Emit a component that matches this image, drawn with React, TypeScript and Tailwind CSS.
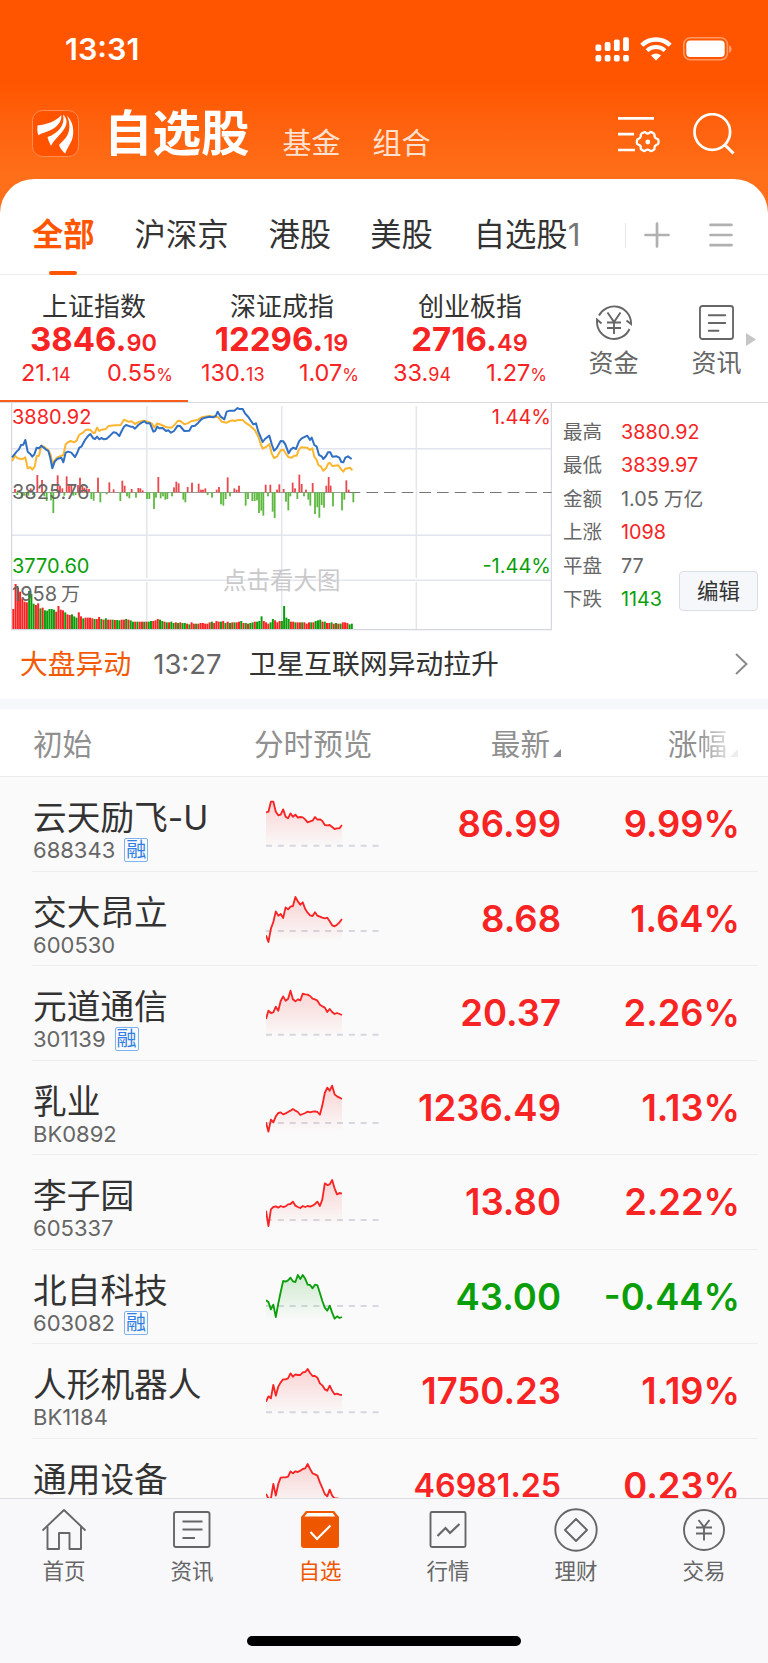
import type { ReactNode } from 'react';

const RED = '#f82323';
const GREEN = '#0a9f0a';

/** 自选股数据，trend 为分时走势（每个点间隔相同），base 为昨收虚线位置 */
interface Stock {
  name: string;
  code: string;
  margin?: boolean;
  price: string;
  change: string;
  small?: boolean;
  trend: number[];
  base: number;
}

const STOCKS: Stock[] = [
  {
    name: '云天励飞-U', code: '688343', margin: true, price: '86.99', change: '9.99%', base: 206,
    trend: [106, 104, 74, 74, 104, 115, 113, 97, 119, 124, 109, 119, 113, 122, 120, 121, 127, 136, 133, 131, 120, 128, 127, 132, 144, 145, 144, 150, 156, 154, 154, 144],
  },
  {
    name: '交大昂立', code: '600530', price: '8.68', change: '1.64%', base: 177,
    trend: [190, 210, 170, 150, 118, 131, 126, 138, 106, 112, 104, 102, 75, 88, 98, 91, 111, 122, 130, 132, 121, 131, 134, 137, 139, 137, 148, 160, 163, 158, 151, 141],
  },
  {
    name: '元道通信', code: '301139', margin: true, price: '20.37', change: '2.26%', base: 206,
    trend: [159, 134, 141, 139, 122, 134, 105, 91, 104, 99, 74, 100, 106, 100, 103, 83, 85, 86, 90, 98, 100, 104, 116, 121, 125, 138, 129, 138, 144, 141, 144, 147],
  },
  {
    name: '乳业', code: 'BK0892', price: '1236.49', change: '1.13%', base: 186,
    trend: [184, 212, 176, 184, 166, 156, 154, 160, 157, 153, 149, 144, 149, 153, 162, 159, 156, 152, 154, 152, 151, 153, 161, 133, 96, 80, 89, 74, 100, 106, 110, 114],
  },
  {
    name: '李子园', code: '605337', price: '13.80', change: '2.22%', base: 195,
    trend: [167, 213, 163, 156, 154, 158, 153, 156, 154, 148, 147, 140, 152, 156, 159, 153, 156, 153, 155, 152, 147, 140, 153, 133, 85, 90, 88, 75, 100, 118, 114, 116],
  },
  {
    name: '北自科技', code: '603082', margin: true, price: '43.00', change: '-0.44%', base: 168,
    trend: [151, 156, 178, 164, 201, 161, 126, 93, 95, 91, 83, 94, 96, 75, 87, 75, 86, 104, 105, 115, 104, 106, 129, 153, 173, 182, 167, 188, 206, 199, 204, 201],
  },
  {
    name: '人形机器人', code: 'BK1184', price: '1750.23', change: '1.19%', base: 205,
    trend: [173, 157, 163, 123, 155, 128, 115, 106, 106, 103, 88, 98, 91, 93, 93, 85, 84, 75, 87, 96, 96, 101, 118, 124, 136, 140, 125, 140, 151, 149, 152, 153],
  },
  {
    name: '通用设备', code: 'BK0545', price: '46981.25', change: '0.23%', small: true, base: 205,
    trend: [165, 178, 179, 135, 170, 135, 116, 115, 115, 113, 97, 103, 97, 99, 95, 90, 88, 75, 90, 103, 106, 110, 130, 147, 165, 172, 152, 170, 178, 178, 180, 180],
  },
];

const INDICES = [
  { name: '上证指数', int: '3846', dec: '90', diff: '21', diffDec: '14', pct: '0.55', box: 'pl-[21px] pr-[15px]' },
  { name: '深证成指', int: '12296', dec: '19', diff: '130', diffDec: '13', pct: '1.07', box: 'pl-[13px] pr-[17px]' },
  { name: '创业板指', int: '2716', dec: '49', diff: '33', diffDec: '94', pct: '1.27', box: 'pl-[17px] pr-[17px]' },
];

const DETAILS = [
  { label: '最高', value: '3880.92', color: 'text-[#f82323]' },
  { label: '最低', value: '3839.97', color: 'text-[#f82323]' },
  { label: '金额', value: '1.05', unit: '万亿', color: 'text-[#666]' },
  { label: '上涨', value: '1098', color: 'text-[#f82323]' },
  { label: '平盘', value: '77', color: 'text-[#666]' },
  { label: '下跌', value: '1143', color: 'text-[#0a9f0a]' },
];

const PRICE_LINE =
  '36,187 50,170 57,163 63,150 70,149 76,135 83,170 90,176 97,185 103,178 110,158 117,160 124,152 137,163 145,168 150,185 157,220 164,200 172,192 184,188 190,202 197,173 204,170 214,173 225,186 231,175 238,158 244,155 255,135 265,122 271,117 280,130 285,132 291,125 298,133 304,129 312,133 320,131 330,122 340,112 348,113 358,123 365,108 372,95 378,90 392,95 398,95 405,101 415,90 425,83 433,79 440,85 450,85 460,110 465,108 472,95 478,100 488,99 498,108 505,106 513,113 522,108 533,92 540,93 553,108 568,107 575,94 585,92 595,83 605,72 615,68 628,65 640,67 648,62 653,50 662,65 673,73 680,50 690,47 703,47 713,39 718,42 728,42 735,55 745,66 760,88 768,85 775,110 788,141 795,132 808,122 816,150 822,167 830,160 842,138 850,139 856,148 866,175 873,163 880,158 888,162 897,139 905,130 922,122 930,135 935,128 943,150 950,155 957,180 965,184 970,192 978,183 984,172 991,172 997,185 1010,184 1018,188 1024,201 1030,202 1036,188 1044,184 1055,192';

const AVG_LINE =
  '36,198 45,182 53,190 63,192 70,191 76,187 83,220 90,216 97,224 104,215 110,183 117,182 124,152 131,155 145,165 152,180 157,205 165,195 172,187 190,180 197,148 205,141 212,138 222,142 230,137 237,120 250,112 258,104 270,104 280,114 285,113 291,98 298,108 305,104 318,102 325,93 345,91 362,90 372,74 385,80 395,79 405,87 418,80 430,77 443,80 455,85 463,97 472,85 485,90 500,97 515,98 525,88 533,78 540,77 553,88 563,85 575,78 590,76 605,67 628,63 655,67 665,80 680,83 690,78 698,76 703,78 715,75 728,75 735,82 750,92 765,106 775,125 782,147 788,161 800,155 808,147 815,175 822,189 832,184 842,166 850,164 857,175 866,187 875,188 883,182 890,182 897,163 903,157 922,158 930,165 937,160 943,185 950,195 955,210 963,215 970,227 978,220 985,205 990,204 997,213 1015,211 1022,221 1030,230 1036,221 1050,218 1057,226';

// [x, 高度]，正数为红柱（向上），负数为绿柱（向下）
const MOMENTUM: Array<[number, number]> = [
  [45, 10], [52, -8], [65, -18], [72, -10], [85, -10], [92, 12], [99, -8], [112, 52], [126, 37], [133, -12], [140, -26], [153, -24],
  [160, -62], [173, 51], [180, 20], [187, 12], [193, -10], [200, 48], [207, 20], [214, 22], [220, -10], [227, -8], [234, 22], [240, 44],
  [247, 20], [253, 14], [260, 12], [267, 10], [274, -20], [281, -25], [294, 44], [301, -30], [320, -6], [328, 30], [341, 9], [361, -26],
  [367, 35], [374, 20], [381, -12], [388, -18], [395, 10], [408, -16], [415, 13], [421, 12], [428, 6], [441, -20], [448, -20], [462, -50],
  [468, -16], [475, 46], [482, -18], [489, -12], [496, -22], [502, -20], [516, -12], [522, 15], [529, 32], [536, 27], [550, -22], [556, -30],
  [563, 16], [576, 29], [596, 26], [603, 8], [609, 8], [616, 12], [623, -8], [636, -16], [650, 8], [657, 16], [663, -36], [670, -40],
  [677, -20], [683, 45], [690, -12], [703, 12], [710, 8], [717, 20], [737, -40], [744, -20], [757, -26], [764, -26], [771, -24], [777, -62],
  [784, -55], [790, -70], [797, 23], [804, -12], [811, 23], [818, -58], [824, -77], [831, 8], [838, 24], [851, 10], [858, -28], [865, -54],
  [871, -12], [878, 29], [885, 12], [892, -20], [898, 53], [905, 25], [912, -12], [918, 8], [925, -22], [931, -40], [938, 28], [945, -65],
  [952, -45], [958, -76], [965, -38], [972, -46], [979, 20], [986, 46], [992, 20], [999, -42], [1026, -54], [1033, -22], [1039, 36],
  [1046, 8], [1060, -30],
];

// 成交量柱，正红负绿
const VOLUME = [
  60, 135, 124, 112, 92, 82, 80, -114, -105, -76, 72, 77, -62, 64, -56, -55, -60, -60, -58, 52, 69, 58, 56, -50, 44, 42, -44, -38, -34,
  50, 38, -32, 34, 34, 34, 32, -30, 30, 36, -30, 28, -32, 28, 28, -28, 27, -27, -26, 28, 28, -30, 28, -26, -22, 22, -22, 22, 22, -22,
  22, -22, -24, 24, 26, 30, -28, -24, 22, -20, 20, -22, -18, 20, -18, 20, -18, -18, 16, -14, 20, 16, -16, 16, 18, 18, 16, 16, 20, -22,
  18, 24, 22, -22, 24, -18, 22, -18, 20, -20, 20, 22, -24, 18, -18, 16, -18, -20, 22, -22, -24, -38, 24, 20, 16, -20, -30, 26, 20, 24,
  -24, -69, -34, -30, 22, 22, -20, 20, 20, -20, 20, 16, 20, -20, 20, -24, -26, -28, 22, -22, 18, 18, -20, 16, -18, 16, -16, 20, 20, 18, -14,
  -16,
];

function StatusBar() {
  return (
    <div className="flex h-[98px] items-center pr-[36px] pl-[65px] text-white">
      <span className="text-[30.5px] leading-[30px] font-semibold">13:31</span>
      <svg className="ml-auto" width="35" height="25" viewBox="0 0 35 25" fill="currentColor">
        {[0, 1, 2, 3].map((i) => (
          <g key={i}>
            <rect x={i * 9.2 + 0.5} y={7.4 - i * 2.4} width="5.8" height={6.6 + i * 2.4} rx="1.7" />
            <rect x={i * 9.2 + 0.5} y="18" width="5.8" height="6.4" rx="1.7" />
          </g>
        ))}
      </svg>
      <svg className="ml-[10px]" width="32" height="24" viewBox="0 0 32 24" fill="none" stroke="currentColor">
        <path d="M1.8 8.2a20.5 20.5 0 0 1 28.4 0" strokeWidth="4.3" />
        <path d="M7 13.6a13 13 0 0 1 18 0" strokeWidth="4" />
        <path d="M11 18.6a7.3 7.3 0 0 1 10 0l-5 4.9z" fill="currentColor" stroke="none" />
      </svg>
      <svg className="ml-[11px]" width="49" height="24" viewBox="0 0 49 24">
        <rect x="0.8" y="0.8" width="43.6" height="22" rx="6.5" fill="none" stroke="#fff" strokeOpacity="0.4" strokeWidth="1.6" />
        <rect x="3.3" y="3.5" width="38.4" height="16.6" rx="4" fill="#fff" />
        <path d="M46.2 8.2c3 1.4 3 6.2 0 7.6z" fill="#fff" fillOpacity="0.5" />
      </svg>
    </div>
  );
}

function AppBar() {
  return (
    <div className="flex h-[71px] items-center pr-[33px] pl-8 text-white">
      <svg width="47" height="47" viewBox="0 0 47 47" fill="#fff">
        <rect x="0.5" y="0.5" width="46" height="46" rx="10" fill="#ff5300" stroke="#ff8f57" />
        <path d="M5.6 15.5C15 14.5 24.5 11 29.3 5c.9 6.5-4.5 12.5-11.5 15.6-4 1.7-8 2.6-11.5 4.6C5.2 22 5.1 18.5 5.6 15.5z" />
        <path d="M31 4.7c3.7 2.7 4.6 7.8 2.3 12.3-3 6.5-10.2 11-14.3 18.8-1.5-2.7-2.7-5.5-3.5-8.8C23 24.5 33.8 17.5 31 4.7z" />
        <path d="M34.7 5.4c5.2 4.7 7.6 12.6 6.2 20.6-1.2 6.8-5.3 10.9-7.7 17.6-2.4-2.2-4.6-4.6-6.2-8.6 3-3.7 7.2-6.5 9.1-11.6 2.2-5.7 1.6-12-1.4-18z" />
      </svg>
      <h1 className="ml-[25px] text-[48.5px] leading-[47px] font-bold">自选股</h1>
      <span className="mt-[21px] ml-[33px] text-[29px] leading-8 text-[#ffe1d1]">基金</span>
      <span className="mt-[21px] ml-8 text-[29px] leading-8 text-[#ffe1d1]">组合</span>
      <svg className="ml-auto" width="42" height="42" viewBox="0 0 42 42" fill="none" stroke="#fff" strokeWidth="2.7">
        <path d="M0 5.3h36M0 21.2h16M0 37h17" />
        <path
          strokeWidth="2.3"
          strokeLinejoin="round"
          d="M25.5 19.5q1.5-1 2.5.4 1.7 1.2 3.4 0 1.2-1.5 2.8-.4l1.6 1q1.2.9.6 2.4.1 2 2 2.7 2.1.2 2.1 2v2.6q-.2 1.5-2 1.7-2 .8-2 2.7.3 1.8-1 2.4l-2 1q-1.2.4-2.3-.9-1.5-1-3.2 0-1.2 1.4-2.6.7l-2-1.2q-1.2-.8-.6-2.2 0-1.9-2-2.5-1.8-.3-1.9-1.7v-2.5q.2-1.5 2-2 1.8-.7 1.9-2.6-.5-1.7.7-2.5z"
        />
        <circle cx="29.8" cy="29" r="2.4" fill="#fff" stroke="none" />
      </svg>
      <svg className="ml-[33px]" width="42" height="42" viewBox="0 0 42 42" fill="none" stroke="#fff" strokeWidth="2.7">
        <circle cx="19.3" cy="19" r="17.8" />
        <path d="M31.5 31.5l9 9" strokeWidth="3" />
      </svg>
    </div>
  );
}

function GroupTabs() {
  return (
    <div className="flex h-[96px] items-center border-b border-[#ebebee] pt-[17px] pl-8 text-[31.3px] leading-[44px] text-[#333]">
      <div className="relative font-bold text-[#ff5500]">
        全部
        <span className="absolute -bottom-[18px] left-[17px] h-1 w-7 rounded-xs bg-[#ff5500]" />
      </div>
      <span className="ml-10">沪深京</span>
      <span className="ml-10">港股</span>
      <span className="ml-[39px]">美股</span>
      <span className="ml-[41px]">
        自选股<span className="text-[#777]">1</span>
      </span>
      <span className="ml-auto h-[25px] w-px bg-[#e8e8ea]" />
      <svg className="ml-[18px]" width="26" height="26" viewBox="0 0 26 26" stroke="#b0b0b0" strokeWidth="2.7" strokeLinecap="round">
        <path d="M13 1.5v23M1.5 13h23" />
      </svg>
      <svg className="mr-[35px] ml-[39px]" width="24" height="26" viewBox="0 0 24 26" stroke="#b0b0b0" strokeWidth="2.7" strokeLinecap="round">
        <path d="M1.5 2.8h21M1.5 13h21M1.5 23.2h21" />
      </svg>
    </div>
  );
}

function NewsGlyph({ size }: { size: number }) {
  return (
    <svg width={size} height={size} viewBox="0 0 36 36" fill="none" stroke="#666" strokeWidth="1.9" strokeLinecap="round">
      <rect x="1" y="1" width="34" height="34" rx="2.5" />
      <path d="M10 10.5h17M10 18.5h17M10 26.5h10" />
    </svg>
  );
}

function IndexPanel() {
  return (
    <div className="flex h-[128px] shrink-0 border-b border-[#d8dae3]">
      {INDICES.map((item, i) => (
        <div
          key={item.name}
          className={`w-[188px] shrink-0 border-b-2 pt-[18px] ${i === 0 ? 'border-[#f95f1b]' : 'border-transparent'}`}
        >
          <div className="text-center text-[26px] leading-7 text-[#333]">{item.name}</div>
          <div className="mt-1 pr-px text-center text-[33px] leading-7 font-bold text-[#f82323]">
            {item.int}.<span className="text-[23.5px] leading-7 font-semibold">{item.dec}</span>
          </div>
          <div className={`mt-1 flex justify-between text-[23.5px] leading-6 text-[#f82323] ${item.box}`}>
            <span>
              {item.diff}.<span className="text-lg leading-6">{item.diffDec}</span>
            </span>
            <span>
              {item.pct}
              <span className="text-[17px] leading-6">%</span>
            </span>
          </div>
        </div>
      ))}
      <div className="ml-6 flex w-[51px] flex-col items-center pt-[27px] text-[25px] leading-7 text-[#666]">
        <svg width="38" height="40" viewBox="0 0 38 40" fill="none" stroke="#666" strokeWidth="1.9">
          <path d="M4 13.5A17 17 0 0 1 36 20v2l-4.5-3.5M34.5 27A17 17 0 0 1 2 20v-2.5l4.5 4" />
          <path d="M12.5 10.5l6.5 9.5 6.5-9.5M19 20v12M12 20.5h14M12 26h14" />
        </svg>
        <span className="mt-[7px]">资金</span>
      </div>
      <div className="ml-[52px] flex w-[51px] flex-col items-center pt-[30px] text-[25px] leading-7 text-[#666]">
        <NewsGlyph size={35} />
        <span className="mt-[9px]">资讯</span>
      </div>
      <svg className="mt-[58px] ml-1 shrink-0" width="10" height="13" viewBox="0 0 10 13" fill="#c6c6c6">
        <path d="M0 0l10 6.5L0 13z" />
      </svg>
    </div>
  );
}

function IndexChart() {
  return (
    <div className="relative ml-[11px] h-[228px] w-[541px] text-xl leading-6">
      <svg className="block" width="541" height="228" viewBox="33 24 1623 684" fill="none">
        <g stroke="#e2e5ee" strokeWidth="4.5">
          <path d="M34 161.5h1620M34 421h1620M34 555.5h1620" />
          <path d="M440.5 33v516M845 33v516M1249 33v516M440.5 561v142M845 561v142M1249 561v142" />
        </g>
        <path d="M35 24v680h1619V24" stroke="#d3d6e0" strokeWidth="3.5" />
        <path d="M36 292.5h1024" stroke="#888" strokeWidth="2.5" />
        <path d="M1046 292.5h609" stroke="#777" strokeWidth="3.5" strokeDasharray="35 18" />
        {MOMENTUM.map(([x, h]) => (
          <rect
            key={x}
            x={x - 2.7}
            y={h > 0 ? 292 - h : 292}
            width="5.4"
            height={Math.abs(h)}
            fill={h > 0 ? '#e9484c' : '#5cb83f'}
          />
        ))}
        {VOLUME.map((v, i) => (
          <rect
            key={i}
            x={37 + i * 6.77}
            y={702 - Math.abs(v)}
            width="6"
            height={Math.abs(v)}
            fill={v > 0 ? RED : GREEN}
          />
        ))}
        <polyline points={AVG_LINE} stroke="#fbb62f" strokeWidth="6" strokeLinejoin="round" />
        <polyline points={PRICE_LINE} stroke="#2f6fc4" strokeWidth="6" strokeLinejoin="round" />
      </svg>
      <span className="absolute top-[2px] left-px text-[#f82323]">3880.92</span>
      <span className="absolute top-[2px] right-px text-[#f82323]">1.44%</span>
      <span className="absolute top-[77px] left-px text-[#666]">3825.76</span>
      <span className="absolute top-[151px] left-px text-[#0a9f0a]">3770.60</span>
      <span className="absolute top-[151px] right-px text-[#0a9f0a]">-1.44%</span>
      <span className="absolute top-[179px] left-px text-[#666]">
        1958<span className="ml-1 text-[19px]">万</span>
      </span>
      <span className="absolute top-[164px] left-[212px] text-[23.5px] leading-7 text-[#c9c9cc]">点击看大图</span>
    </div>
  );
}

function IndexDetail() {
  return (
    <div className="relative flex-1 pt-[12px] pl-[11px]">
      {DETAILS.map((d) => (
        <div key={d.label} className="flex h-[33.5px] items-center text-[19.5px] leading-6">
          <span className="w-[58px] text-[#666]">{d.label}</span>
          <span className={`text-[19.8px] ${d.color}`}>
            {d.value}
            {d.unit && <span className="ml-[5px]">{d.unit}</span>}
          </span>
        </div>
      ))}
      <button className="absolute top-[168px] right-[10px] h-10 w-[79px] rounded border border-[#dcdee6] bg-[#f6f7fa] text-[21.5px] leading-6 text-[#333]">
        编辑
      </button>
    </div>
  );
}

function MarketAlert() {
  return (
    <div className="flex h-[68px] shrink-0 items-center pr-[20px] pb-[2px] pl-5 text-[27.8px] leading-8">
      <span className="text-[#f25a05]">大盘异动</span>
      <span className="ml-[22px] text-[27.5px] text-[#666]">13:27</span>
      <span className="ml-[27px] text-[#333]">卫星互联网异动拉升</span>
      <svg className="ml-auto" width="13" height="22" viewBox="0 0 13 22" fill="none" stroke="#8c8c8c" strokeWidth="2">
        <path d="M1 1l10.5 10L1 21" />
      </svg>
    </div>
  );
}

function SortMark({ color }: { color: string }) {
  return (
    <svg className="mb-3 self-end" width="8" height="8" viewBox="0 0 8 8" fill={color}>
      <path d="M8 0v8H0z" />
    </svg>
  );
}

function ListHeader() {
  return (
    <div className="flex h-[68px] shrink-0 items-center border-b border-[#ececee] pt-[2px] pr-[30px] pl-[33px] text-[29.6px] leading-[50px] text-[#909090]">
      <span className="w-[221px]">初始</span>
      <span className="w-[119px]">分时预览</span>
      <div className="flex flex-1 items-center justify-end gap-[3px]">
        <span>最新</span>
        <SortMark color="#8e8e96" />
      </div>
      <div className="flex w-[177px] items-center justify-end gap-[3px]">
        <span>
          涨<span className="bg-linear-to-r from-[#909090] to-[#dcdcdc] bg-clip-text text-transparent">幅</span>
        </span>
        <SortMark color="#ededef" />
      </div>
    </div>
  );
}

function Sparkline({ stock, id }: { stock: Stock; id: string }) {
  const falling = stock.change.startsWith('-');
  const color = falling ? GREEN : RED;
  const points = stock.trend.map((y, i) => `${(i * 7.35).toFixed(1)},${y}`).join(' ');
  return (
    <svg className="shrink-0" width="114" height="94" viewBox="0 0 342 282" fill="none">
      <defs>
        <linearGradient id={id} x1="0" y1="75" x2="0" y2="212" gradientUnits="userSpaceOnUse">
          <stop offset="0" stopColor={color} stopOpacity="0.18" />
          <stop offset="1" stopColor={color} stopOpacity="0" />
        </linearGradient>
      </defs>
      <path d={`M0 ${stock.base}h338`} stroke="#d6d8df" strokeWidth="6" strokeDasharray="18 17.5" />
      <polygon points={`0,212 ${points} 228,212`} fill={`url(#${id})`} />
      <polyline points={points} stroke={color} strokeWidth="5.5" strokeLinejoin="round" />
    </svg>
  );
}

function StockRow({ stock, id }: { stock: Stock; id: string }) {
  const tone = stock.change.startsWith('-') ? 'text-[#0a9f0a]' : 'text-[#f82323]';
  return (
    <div className="ml-8 mr-[10px] flex h-[94.5px] shrink-0 items-start border-b border-[#ededef] pl-px">
      <div className="w-[233px] shrink-0 pt-[22px]">
        <div className="text-[33.7px] leading-[38px] whitespace-nowrap text-[#333]">{stock.name}</div>
        <div className="mt-[1px] flex h-6 items-center text-[22px] leading-6 text-[#666]">
          {stock.code}
          {stock.margin && (
            <span className="ml-[9px] flex h-6 w-6 items-center justify-center rounded-xs border border-[#7fb2f0] text-[20px] leading-5 text-[#2f80e4]">
              融
            </span>
          )}
        </div>
      </div>
      <Sparkline stock={stock} id={id} />
      <div className={`flex flex-1 pt-[27px] text-right text-[36.5px] leading-10 font-semibold ${tone}`}>
        <span className={`flex-1 ${stock.small ? 'text-[32.2px]' : ''}`}>{stock.price}</span>
        <span className="w-[179px] text-[36.3px]">{stock.change}</span>
      </div>
      <span className="w-[18px]" />
    </div>
  );
}

const NAV_ITEMS: Array<{ label: string; icon: ReactNode; active?: boolean }> = [
  {
    label: '首页',
    icon: (
      <g strokeLinejoin="round">
        <path d="M.5 22.5L22 2l21.5 20.5" />
        <path d="M5.5 18.5v22.5h11.5V25h10.5v16h11.5V18.5" />
      </g>
    ),
  },
  {
    label: '资讯',
    icon: (
      <>
        <rect x="4" y="4" width="35.5" height="35" rx="2" />
        <path d="M12.5 13.5h20M12.5 21.5h20M12.5 30h12.5" />
      </>
    ),
  },
  {
    label: '自选',
    active: true,
    icon: (
      <>
        <path d="M8 3h28l5 6v28a3 3 0 0 1-3 3H6a3 3 0 0 1-3-3V9z" fill="#ee5700" stroke="none" />
        <path d="M9.2 5h25.6l2.4 3.5H6.5z" fill="#fff" stroke="none" />
        <path d="M12.5 24l6.5 7L32.5 17.5" stroke="#fff" strokeWidth="2.2" />
      </>
    ),
  },
  {
    label: '行情',
    icon: (
      <>
        <rect x="4.5" y="4" width="35" height="35" rx="1.5" />
        <path d="M11.5 28l8-8 4.5 5L33.5 16" strokeWidth="2.2" />
      </>
    ),
  },
  {
    label: '理财',
    icon: (
      <>
        <circle cx="22" cy="22" r="20.7" />
        <path d="M22 11l11 11-11 11-11-11z" strokeLinejoin="round" />
      </>
    ),
  },
  {
    label: '交易',
    icon: (
      <>
        <circle cx="22" cy="22" r="20" />
        <path d="M16.5 12l5.5 7 5.5-7M22 19v13.5M14 19.5h16M14 25.5h16" />
      </>
    ),
  },
];

function BottomNav() {
  return (
    <nav className="flex h-[165px] shrink-0 flex-col border-t border-[#dddde4] bg-[#f8f8fb]">
      <div className="flex">
        {NAV_ITEMS.map((item) => (
          <div
            key={item.label}
            className={`flex flex-1 flex-col items-center pt-[9px] text-[21.5px] leading-6 ${item.active ? 'text-[#ee5700]' : 'text-[#666]'}`}
          >
            <svg width="44" height="44" viewBox="0 0 44 44" fill="none" stroke="#666" strokeWidth="1.9">
              {item.icon}
            </svg>
            <span className="mt-[7px]">{item.label}</span>
          </div>
        ))}
      </div>
      <div className="mx-auto mt-[53px] h-[10px] w-[274px] rounded-full bg-black" />
    </nav>
  );
}

export default function App() {
  return (
    <div className="flex h-[1663px] w-[768px] flex-col overflow-hidden bg-white font-[Inter,'Noto_Sans_CJK_SC',sans-serif]">
      <div className="shrink-0 bg-linear-to-b from-[#ff5500] from-29% to-[#ff6f19] to-65%">
        <StatusBar />
        <AppBar />
        <div className="mt-[10px] rounded-t-[34px] bg-white">
          <GroupTabs />
        </div>
      </div>
      <IndexPanel />
      <div className="flex shrink-0">
        <IndexChart />
        <IndexDetail />
      </div>
      <MarketAlert />
      <div className="h-[10px] shrink-0 bg-[#f5f7fa]" />
      <ListHeader />
      <div className="flex min-h-0 flex-1 flex-col overflow-hidden bg-[#fafafa]">
        {STOCKS.map((s, i) => (
          <StockRow key={s.code} stock={s} id={`trend-${i}`} />
        ))}
      </div>
      <BottomNav />
    </div>
  );
}
